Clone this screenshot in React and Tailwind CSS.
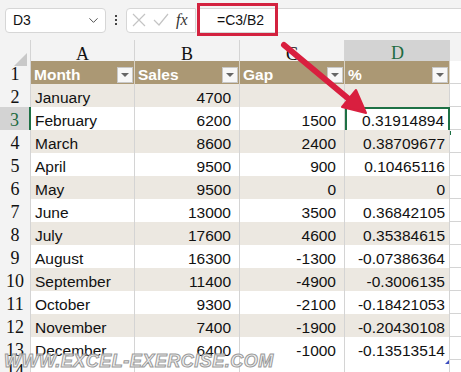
import { ChevronDown } from 'lucide-react'

const rows = [
  ['January', '4700', '', ''],
  ['February', '6200', '1500', '0.31914894'],
  ['March', '8600', '2400', '0.38709677'],
  ['April', '9500', '900', '0.10465116'],
  ['May', '9500', '0', '0'],
  ['June', '13000', '3500', '0.36842105'],
  ['July', '17600', '4600', '0.35384615'],
  ['August', '16300', '-1300', '-0.07386364'],
  ['September', '11400', '-4900', '-0.3006135'],
  ['October', '9300', '-2100', '-0.18421053'],
  ['November', '7400', '-1900', '-0.20430108'],
  ['December', '6400', '-1000', '-0.13513514'],
]

const cols = 'grid grid-cols-[31px_104px_105px_105px_105px_11px]'
const serif = { fontFamily: '"Liberation Serif", "DejaVu Serif", serif' }

function FilterBtn() {
  return (
    <span className="flex h-[16px] w-[16px] items-center justify-center border border-[#c8c8c8] bg-[#f7f7f7]">
      <span className="h-0 w-0 border-x-[4px] border-t-[4px] border-x-transparent border-t-[#666]" />
    </span>
  )
}

function HeadCell({ label }) {
  return (
    <div className="flex h-full items-center justify-between border-r border-[#d9d2c4] bg-[#ab9874] pl-[3px] pr-[1px] font-bold text-white">
      <span>{label}</span>
      <FilterBtn />
    </div>
  )
}

export default function App() {
  return (
    <div
      className="relative h-[372px] w-[461px] overflow-hidden bg-white text-[15.5px] text-[#111]"
      style={{ fontFamily: '"Liberation Sans", Arial, sans-serif' }}
    >
      {/* formula bar */}
      <div className="flex h-[40px] items-center bg-[#f3f3f3] pl-[5px]">
        <div className="flex h-[25px] w-[101px] items-center justify-between rounded-[4px] border border-[#d6d6d6] bg-white pl-[7px] pr-[4px] text-[14px]">
          <span>D3</span>
          <ChevronDown size={15} strokeWidth={1.5} className="text-[#444]" />
        </div>
        <div className="mx-[9px] flex flex-col gap-[2px]">
          <span className="h-[2px] w-[2px] bg-[#444]" />
          <span className="h-[2px] w-[2px] bg-[#444]" />
          <span className="h-[2px] w-[2px] bg-[#444]" />
        </div>
        <div className="flex h-[25px] w-[70px] items-center gap-[7px] rounded-l-[4px] border border-[#d6d6d6] bg-white pl-[5px]">
          <svg width="14" height="14" viewBox="0 0 14 14" stroke="#c4c4c4" strokeWidth="1.2">
            <path d="M1 1 L13 13 M13 1 L1 13" />
          </svg>
          <svg width="16" height="14" viewBox="0 0 16 14" stroke="#c4c4c4" strokeWidth="1.2" fill="none">
            <path d="M1 7 L6 12 L15 1" />
          </svg>
          <span className="text-[16px] italic text-[#333]" style={serif}>fx</span>
        </div>
        <div className="ml-[3px] flex h-[25px] flex-1 items-center border-y border-l border-[#d6d6d6] bg-white pl-[17px] text-[14px]">
          =C3/B2
        </div>
      </div>

      {/* column headers */}
      <div className={`${cols} h-[21px] bg-[#f3f3f3] text-[18px]`} style={serif}>
        <div className="relative border-r border-[#d4d4d4]">
          <span className="absolute bottom-[3px] right-[3px] h-0 w-0 border-b-[13px] border-l-[13px] border-b-[#c8c8c8] border-l-transparent" />
        </div>
        <div className="flex items-center justify-center border-r border-[#d4d4d4]">A</div>
        <div className="flex items-center justify-center border-r border-[#d4d4d4]">B</div>
        <div className="flex items-center justify-center border-r border-[#d4d4d4]">C</div>
        <div className="flex items-center justify-center border-b-2 border-[#1e7145] bg-[#d3d3d3] text-[#1e6b41]">D</div>
        <div />
      </div>

      {/* row 1: table header */}
      <div className={`${cols} h-[23px] border-b border-[#d4d4d4]`}>
        <div className="flex items-center justify-center border-r border-[#d4d4d4] bg-[#f3f3f3] text-[18px]" style={serif}>1</div>
        <HeadCell label="Month" />
        <HeadCell label="Sales" />
        <HeadCell label="Gap" />
        <HeadCell label="%" />
        <div />
      </div>

      {rows.map((r, i) => {
        const n = i + 2
        const band = i % 2 === 0 ? 'bg-[#ece8e1]' : 'bg-white'
        const sel = n === 3
        return (
          <div key={n} className={`${cols} h-[23px] border-b border-[#d4d4d4]`}>
            <div
              className={`flex items-center justify-center border-r text-[18px] ${sel ? 'border-[#1e7145] border-r-2 bg-[#d3d3d3] text-[#1e6b41]' : 'border-[#d4d4d4] bg-[#f3f3f3]'}`}
              style={serif}
            >
              {n}
            </div>
            <div className={`flex items-center border-r border-[#d4d4d4] pl-[4px] ${band}`}>{r[0]}</div>
            <div className={`flex items-center justify-end border-r border-[#d4d4d4] pr-[8px] ${band}`}>{r[1]}</div>
            <div className={`flex items-center justify-end border-r border-[#d4d4d4] pr-[8px] ${band}`}>{r[2]}</div>
            <div
              className={`relative flex items-center justify-end pr-[4px] ${band} ${sel ? 'border-2 border-[#1e7145]' : 'border-r border-[#d4d4d4]'}`}
            >
              {r[3]}
              {sel && <span className="absolute bottom-[-4px] right-[-4px] h-[6px] w-[6px] border border-white bg-[#1e7145]" />}
              {n === 13 && <span className="absolute bottom-0 right-0 h-0 w-0 border-b-[4px] border-l-[4px] border-b-[#3b4cc0] border-l-transparent" />}
            </div>
            <div />
          </div>
        )
      })}

      <div className={`${cols} h-[12px]`}>
        <div className="border-r border-[#d4d4d4] bg-[#f3f3f3] text-center text-[18px] leading-[22px]" style={serif}>14</div>
        <div className="border-r border-[#d4d4d4]" />
        <div className="border-r border-[#d4d4d4]" />
        <div className="border-r border-[#d4d4d4]" />
        <div className="border-r border-[#d4d4d4]" />
        <div />
      </div>

      {/* red highlight on formula */}
      <div className="absolute left-[197px] top-[3px] h-[33px] w-[81px] border-[3px] border-[#d3223f]" />

      {/* arrow */}
      <svg className="absolute left-0 top-0" width="461" height="372">
        <line x1="284" y1="45" x2="350" y2="100" stroke="#d91f3f" strokeWidth="6" strokeLinecap="round" />
        <polygon points="366,113 342,107 356,90" fill="#d91f3f" stroke="#d91f3f" strokeWidth="2" strokeLinejoin="round" />
      </svg>

      {/* watermark */}
      <div
        className="absolute left-[4px] top-[351px] text-[18px] leading-[20px] font-bold italic tracking-[0.5px] text-[#eeeeee]/80 [-webkit-text-stroke:1px_#9a9a9a]"
        style={{ fontFamily: '"Liberation Sans", Arial, sans-serif' }}
      >
        WWW.EXCEL-EXERCISE.COM
      </div>
    </div>
  )
}
